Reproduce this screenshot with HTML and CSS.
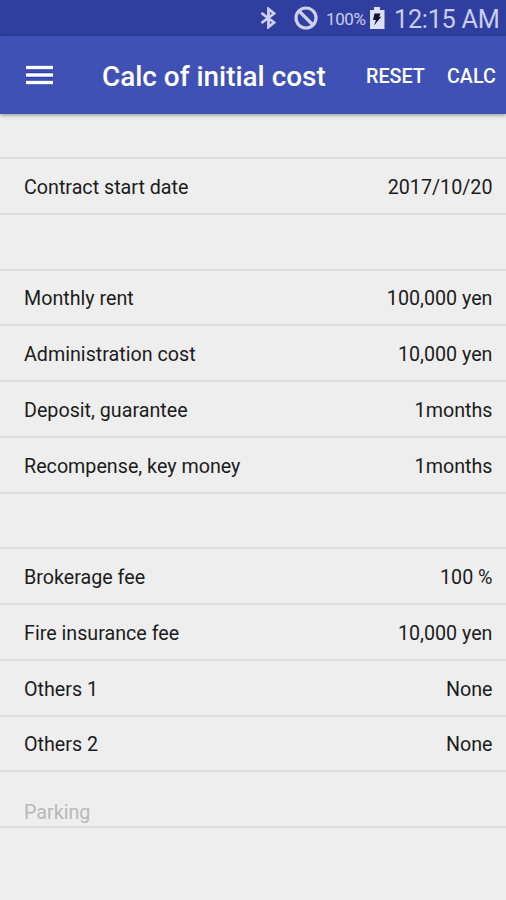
FILE: index.html
```html
<!DOCTYPE html>
<html lang="en">
<head>
<meta charset="utf-8">
<title>Calc of initial cost</title>
<link rel="stylesheet" href="styles.css">
</head>
<body>
<div class="status">
<svg class="bluetooth" width="18" height="22" viewBox="0 0 18 22"><path d="M2.500 6L15 15.500 9.500 20V2L15 6.500 2.500 16"/></svg>
<svg class="blocked" width="24" height="24" viewBox="0 0 24 24"><circle cx="12" cy="12" r="10"/><path d="M5 5l14 14"/></svg>
<span class="percent">100%</span>
<svg class="battery" width="16" height="22" viewBox="0 0 16 22"><path class="case" d="M5 0h6v3h4.500v19H1V3h4z"/><path class="bolt" d="M5.500 6.500h6L10 10l2.500-.5L5 18.500l2-5.500H4z"/></svg>
<span class="clock">12:15 AM</span>
</div>
<header class="bar">
<svg class="menu" width="27" height="20" viewBox="0 0 27 20"><path class="edge" d="M0 2.500h27M0 10h27M0 17.500h27"/><path d="M0 2.500h27M0 10h27M0 17.500h27"/></svg>
<h1>Calc of initial cost</h1>
<span class="reset">RESET</span>
<span class="calc">CALC</span>
</header>
<main>
<section class="group">
<div class="row"><span>Contract start date</span><span>2017/10/20</span></div>
</section>
<section class="group">
<div class="row"><span>Monthly rent</span><span>100,000 yen</span></div>
<div class="row"><span>Administration cost</span><span>10,000 yen</span></div>
<div class="row"><span>Deposit, guarantee</span><span>1months</span></div>
<div class="row"><span>Recompense, key money</span><span>1months</span></div>
</section>
<section class="group">
<div class="row"><span>Brokerage fee</span><span>100 %</span></div>
<div class="row"><span>Fire insurance fee</span><span>10,000 yen</span></div>
<div class="row"><span>Others 1</span><span>None</span></div>
<div class="row"><span>Others 2</span><span>None</span></div>
</section>
<h2 class="parking">Parking</h2>
</main>
</body>
</html>
```
FILE: styles.css
```css
* { box-sizing: border-box; }
body { margin: 0; width: 506px; height: 900px; overflow: hidden; background: #eee; color: #1c1c1c; font-family: Roboto, "Liberation Sans", sans-serif; }
svg { display: block; flex: none; fill: none; stroke: #cdd0f0; stroke-width: 2.8; }
.status { display: flex; align-items: center; height: 36px; padding-left: 259px; background: #303f9f; color: #c9cdee; white-space: nowrap; }
.blocked { margin-left: 17px; stroke-width: 3.2; }
.percent { width: 42px; margin: 2px 0 0 8px; font-size: 17px; letter-spacing: -.4px; }
.battery { margin: -1px 0 0 1px; stroke: none; }
.case { fill: #dcdff8; }
.bolt { fill: #10142c; }
.clock { margin: 2px 0 0 9px; font-size: 25.3px; letter-spacing: -.3px; }
.bar { display: flex; align-items: center; height: 78px; padding-left: 26px; background: #3f51b5; color: #fff; box-shadow: 0 1px 4px #0006; white-space: nowrap; }
.menu { margin-top: -1px; stroke: #fff; stroke-width: 3.5; }
.menu .edge { stroke: #2539a8; stroke-width: 5.5; }
h1 { width: 264px; margin: 2px 0 0 49px; font-size: 27.9px; font-weight: 500; }
.reset, .calc { margin-top: 2px; font-size: 19.7px; font-weight: 500; }
.reset { width: 81px; }
.group { padding-top: 43px; }
.group + .group { padding-top: 55.75px; }
.row { display: flex; align-items: center; justify-content: space-between; height: 55.75px; padding: 5px 13.5px 0 24px; font-size: 19.7px; box-shadow: inset 0 2px #dedede, 0 2px #dedede; }
.parking { height: 57.75px; margin: 0; padding: 30.5px 24px 0; border-bottom: 2px solid #dedede; color: #b8b8b8; font-size: 19.7px; font-weight: 400; }
```
